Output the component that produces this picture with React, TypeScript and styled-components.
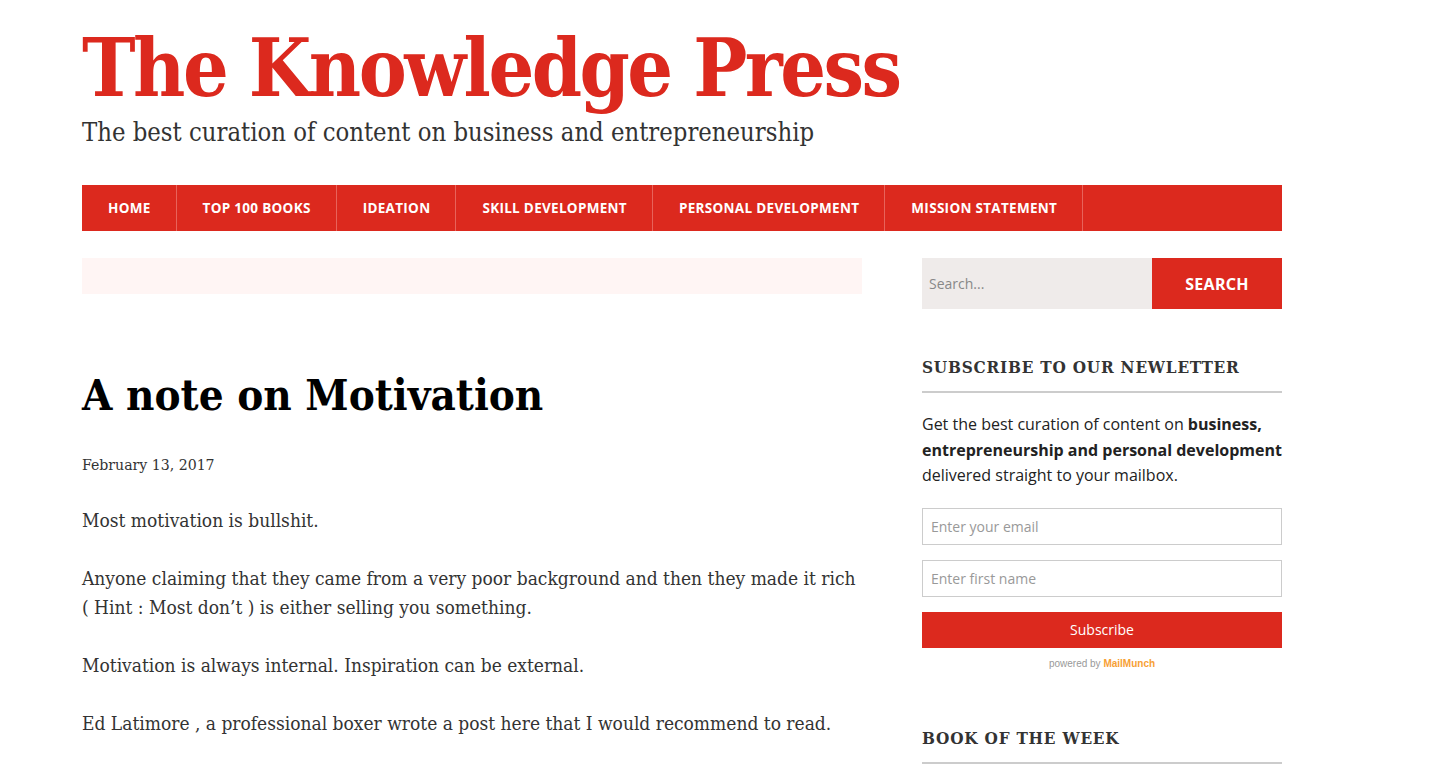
import React from "react";
import styled, { createGlobalStyle } from "styled-components";

const RED = "#dc291e";
const SLAB = `"DejaVu Serif Condensed", "DejaVu Serif", serif`;
const SANS = `"Open Sans", "Noto Sans", sans-serif`;

const GlobalStyle = createGlobalStyle`
  html, body {
    margin: 0;
    padding: 0;
    background: #fff;
  }
  body {
    font-family: ${SANS};
    color: #333;
  }
  * { box-sizing: border-box; }
`;

const navItems = [
  "Home",
  "Top 100 Books",
  "Ideation",
  "Skill Development",
  "Personal Development",
  "Mission Statement",
];

const App = () => {
  return (
    <>
      <GlobalStyle />
      <Page>
        <Header>
          <SiteTitle>The Knowledge Press</SiteTitle>
          <Tagline>The best curation of content on business and entrepreneurship</Tagline>
        </Header>

        <Nav>
          {navItems.map((item) => (
            <NavItem key={item}>{item}</NavItem>
          ))}
        </Nav>

        <Columns>
          <Main>
            <AdBox />
            <PostTitle>A note on Motivation</PostTitle>
            <PostDate>February 13, 2017</PostDate>
            <Para>Most motivation is bullshit.</Para>
            <Para>
              Anyone claiming that they came from a very poor background and then they made it rich
              {" "}(&nbsp;Hint : Most don’t ) is either selling you something.
            </Para>
            <Para>Motivation is always internal. Inspiration can be external.</Para>
            <Para>Ed Latimore , a professional boxer wrote a post here that I would recommend to read.</Para>
          </Main>

          <Sidebar>
            <SearchForm>
              <SearchInput placeholder="Search..." />
              <SearchButton>Search</SearchButton>
            </SearchForm>

            <Widget>
              <WidgetTitle>Subscribe to our Newletter</WidgetTitle>
              <WidgetText>
                Get the best curation of content on <b>business, entrepreneurship and personal development</b>{" "}
                delivered straight to your mailbox.
              </WidgetText>
              <FormField placeholder="Enter your email" />
              <FormField placeholder="Enter first name" />
              <SubscribeButton>Subscribe</SubscribeButton>
              <Powered>
                powered by <span>MailMunch</span>
              </Powered>
            </Widget>

            <Widget $gap={57}>
              <WidgetTitle>Book of the Week</WidgetTitle>
            </Widget>
          </Sidebar>
        </Columns>
      </Page>
    </>
  );
};

export default App;

const Page = styled.div`
  width: 1200px;
  margin-left: 82px;
  padding-top: 22px;
`;

const Header = styled.header`
  display: flex;
  flex-direction: column;
`;

const SiteTitle = styled.h1`
  margin: 0;
  font-family: ${SLAB};
  font-size: 80px;
  font-weight: 700;
  line-height: 92px;
  color: ${RED};
  letter-spacing: -2.5px;
`;

const Tagline = styled.p`
  margin: 2px 0 0;
  font-family: ${SLAB};
  font-size: 25.4px;
  line-height: 32px;
  color: #333;
`;

const Nav = styled.nav`
  display: flex;
  height: 46px;
  margin-top: 37px;
  background: ${RED};
`;

const NavItem = styled.a`
  display: flex;
  align-items: center;
  padding: 0 25px 0 26px;
  border-right: 1px solid #e8635a;
  font-family: ${SANS};
  font-size: 13.5px;
  font-weight: 700;
  letter-spacing: 0.3px;
  text-transform: uppercase;
  color: #fff;
  cursor: pointer;
`;

const Columns = styled.div`
  display: grid;
  grid-template-columns: 780px 360px;
  column-gap: 60px;
  margin-top: 27px;
`;

const Main = styled.main`
  display: flex;
  flex-direction: column;
`;

const AdBox = styled.div`
  height: 36px;
  background: #fff5f4;
`;

const PostTitle = styled.h2`
  margin: 72px 0 0;
  font-family: ${SLAB};
  font-size: 43.5px;
  font-weight: 700;
  line-height: 58px;
  color: #000;
`;

const PostDate = styled.div`
  margin-top: 30px;
  font-family: ${SLAB};
  font-size: 15.7px;
  line-height: 22px;
  color: #333;
`;

const Para = styled.p`
  margin: 22px 0 7px;
  font-family: ${SLAB};
  font-size: 19px;
  line-height: 29px;
  color: #333;
  &:first-of-type { margin-top: 30px; }
`;

const Sidebar = styled.aside`
  display: flex;
  flex-direction: column;
`;

const SearchForm = styled.form`
  display: flex;
  height: 51px;
`;

const SearchInput = styled.input`
  flex: 1;
  min-width: 0;
  border: none;
  background: #efebea;
  padding: 0 7px;
  font-family: ${SANS};
  font-size: 14px;
  color: #333;
  outline: none;
  &::placeholder { color: #888; }
`;

const SearchButton = styled.button`
  width: 130px;
  border: none;
  background: ${RED};
  color: #fff;
  font-family: "Noto Sans", ${SANS};
  font-size: 16px;
  font-weight: 700;
  letter-spacing: 0.3px;
  text-transform: uppercase;
  cursor: pointer;
`;

const Widget = styled.section<{ $gap?: number }>`
  display: flex;
  flex-direction: column;
  margin-top: ${(p) => p.$gap ?? 46}px;
`;

const WidgetTitle = styled.h3`
  margin: 0;
  padding-bottom: 12px;
  border-bottom: 2px solid #ccc;
  font-family: ${SLAB};
  font-size: 17px;
  font-weight: 700;
  line-height: 24px;
  letter-spacing: 0.8px;
  text-transform: uppercase;
  color: #333;
`;

const WidgetText = styled.p`
  margin: 19px 0 0;
  font-family: ${SANS};
  font-size: 16px;
  line-height: 25.5px;
  color: #222;
  b { font-weight: 700; }
`;

const FormField = styled.input`
  height: 37px;
  margin-top: 19px;
  border: 1px solid #ccc;
  padding: 0 8px;
  font-family: ${SANS};
  font-size: 14px;
  outline: none;
  &::placeholder { color: #999; }
  & + & { margin-top: 15px; }
`;

const SubscribeButton = styled.button`
  height: 36px;
  margin-top: 15px;
  border: none;
  background: ${RED};
  color: #fff;
  font-family: ${SANS};
  font-size: 14px;
  cursor: pointer;
`;

const Powered = styled.div`
  margin-top: 10px;
  text-align: center;
  font-family: "Liberation Sans", Arial, sans-serif;
  font-size: 10px;
  color: #999;
  span {
    color: #f7a035;
    font-weight: 700;
  }
`;
